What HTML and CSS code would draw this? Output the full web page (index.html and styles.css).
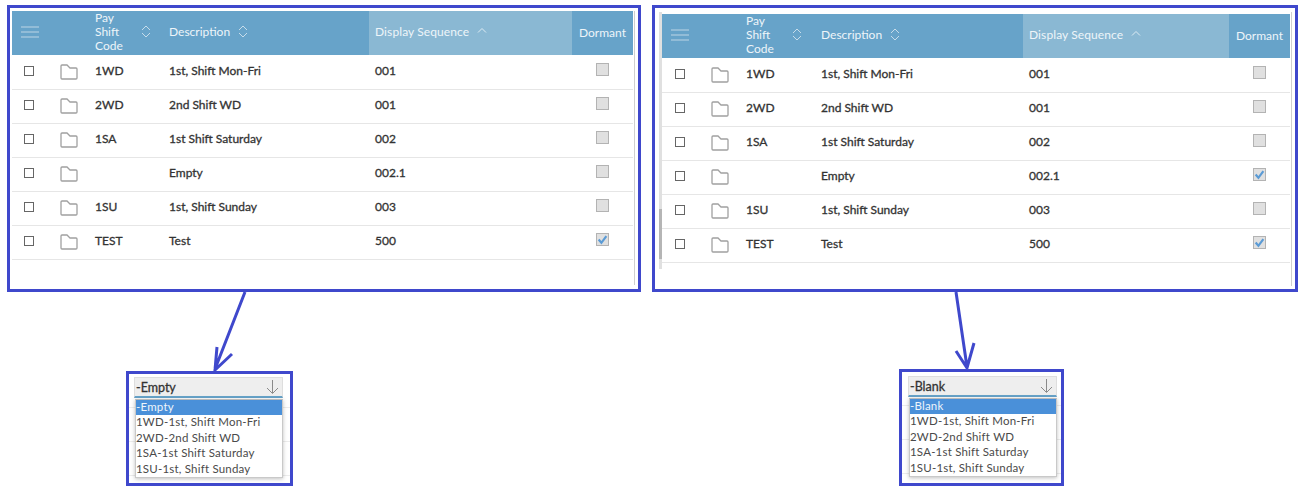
FILE: index.html
```html
<!DOCTYPE html>
<html lang="en">

<head>
    <meta charset="UTF-8">
    <title>Pay Shift Codes</title>
    <link rel="stylesheet" href="styles.css">
</head>

<body>

    <svg width="0" height="0" class="defs">
        <symbol id="folder" viewBox="0 0 18 16">
            <path d="M1 14V2q0-1 1-1h5l3 3h6q1 0 1 1v9q0 1-1 1H2q-1 0-1-1z" fill="#fff" stroke="#a0a0a0" stroke-width="1.300"/>
        </symbol>
        <symbol id="menu" viewBox="0 0 18 12">
            <path d="M0 1h18M0 6h18M0 11h18" stroke="#bdd6e6" stroke-width="1.200" fill="none"/>
        </symbol>
        <symbol id="sort" viewBox="0 0 10 13">
            <path d="M1 5l4-4 4 4M1 8l4 4 4-4" stroke="#c6dcea" fill="none"/>
        </symbol>
        <symbol id="sort-up" viewBox="0 0 10 5">
            <path d="M1 4.500l4-4 4 4" stroke="#dceaf2" fill="none"/>
        </symbol>
        <symbol id="tick" viewBox="0 0 10 10">
            <path d="M1.500 5l2.500 3 4.500-6" stroke="#5b9bd5" stroke-width="2" fill="none"/>
        </symbol>
        <symbol id="down" viewBox="0 0 13 14">
            <path d="M6.500 0v13M1 8l5.500 5.500L12 8" stroke="#8a8a8a" fill="none"/>
        </symbol>
    </svg>

    <section class="top">

        <div class="panel panel-a">
            <table class="grid">
                <colgroup>
                    <col class="c-sel"><col class="c-dir"><col class="c-code"><col class="c-desc"><col class="c-seq"><col class="c-dor">
                </colgroup>
                <thead>
                    <tr>
                        <th class="menu-cell"><svg class="menu-ico"><use href="#menu"/></svg></th>
                        <th></th>
                        <th><div class="code-head"><span>Pay<br>Shift<br>Code</span><svg class="sort-ico"><use href="#sort"/></svg></div></th>
                        <th><div class="desc-head"><span>Description</span><svg class="sort-ico"><use href="#sort"/></svg></div></th>
                        <th class="sorted"><div class="desc-head"><span>Display Sequence</span><svg class="up-ico"><use href="#sort-up"/></svg></div></th>
                        <th>Dormant</th>
                    </tr>
                </thead>
                <tbody>
                    <tr><td class="sel"><i class="box"></i></td><td><svg class="dir"><use href="#folder"/></svg></td><td>1WD</td><td>1st, Shift Mon-Fri</td><td>001</td><td class="dor"><i class="flag"></i></td></tr>
                    <tr><td class="sel"><i class="box"></i></td><td><svg class="dir"><use href="#folder"/></svg></td><td>2WD</td><td>2nd Shift WD</td><td>001</td><td class="dor"><i class="flag"></i></td></tr>
                    <tr><td class="sel"><i class="box"></i></td><td><svg class="dir"><use href="#folder"/></svg></td><td>1SA</td><td>1st Shift Saturday</td><td>002</td><td class="dor"><i class="flag"></i></td></tr>
                    <tr><td class="sel"><i class="box"></i></td><td><svg class="dir"><use href="#folder"/></svg></td><td></td><td>Empty</td><td>002.1</td><td class="dor"><i class="flag"></i></td></tr>
                    <tr><td class="sel"><i class="box"></i></td><td><svg class="dir"><use href="#folder"/></svg></td><td>1SU</td><td>1st, Shift Sunday</td><td>003</td><td class="dor"><i class="flag"></i></td></tr>
                    <tr><td class="sel"><i class="box"></i></td><td><svg class="dir"><use href="#folder"/></svg></td><td>TEST</td><td>Test</td><td>500</td><td class="dor"><i class="flag"><svg class="tick"><use href="#tick"/></svg></i></td></tr>
                </tbody>
            </table>
            <div class="hairline"></div>
        </div>

        <div class="panel panel-b">
            <div class="scroller"><div class="thumb"></div></div>
            <table class="grid">
                <colgroup>
                    <col class="c-sel"><col class="c-dir"><col class="c-code"><col class="c-desc"><col class="c-seq"><col class="c-dor">
                </colgroup>
                <thead>
                    <tr>
                        <th class="menu-cell"><svg class="menu-ico"><use href="#menu"/></svg></th>
                        <th></th>
                        <th><div class="code-head"><span>Pay<br>Shift<br>Code</span><svg class="sort-ico"><use href="#sort"/></svg></div></th>
                        <th><div class="desc-head"><span>Description</span><svg class="sort-ico"><use href="#sort"/></svg></div></th>
                        <th class="sorted"><div class="desc-head"><span>Display Sequence</span><svg class="up-ico"><use href="#sort-up"/></svg></div></th>
                        <th>Dormant</th>
                    </tr>
                </thead>
                <tbody>
                    <tr><td class="sel"><i class="box"></i></td><td><svg class="dir"><use href="#folder"/></svg></td><td>1WD</td><td>1st, Shift Mon-Fri</td><td>001</td><td class="dor"><i class="flag"></i></td></tr>
                    <tr><td class="sel"><i class="box"></i></td><td><svg class="dir"><use href="#folder"/></svg></td><td>2WD</td><td>2nd Shift WD</td><td>001</td><td class="dor"><i class="flag"></i></td></tr>
                    <tr><td class="sel"><i class="box"></i></td><td><svg class="dir"><use href="#folder"/></svg></td><td>1SA</td><td>1st Shift Saturday</td><td>002</td><td class="dor"><i class="flag"></i></td></tr>
                    <tr><td class="sel"><i class="box"></i></td><td><svg class="dir"><use href="#folder"/></svg></td><td></td><td>Empty</td><td>002.1</td><td class="dor"><i class="flag"><svg class="tick"><use href="#tick"/></svg></i></td></tr>
                    <tr><td class="sel"><i class="box"></i></td><td><svg class="dir"><use href="#folder"/></svg></td><td>1SU</td><td>1st, Shift Sunday</td><td>003</td><td class="dor"><i class="flag"></i></td></tr>
                    <tr><td class="sel"><i class="box"></i></td><td><svg class="dir"><use href="#folder"/></svg></td><td>TEST</td><td>Test</td><td>500</td><td class="dor"><i class="flag"><svg class="tick"><use href="#tick"/></svg></i></td></tr>
                </tbody>
            </table>
            <div class="hairline"></div>
        </div>

    </section>

    <section class="bottom">

        <div class="callout callout-a">
            <div class="picker">-Empty<svg class="down"><use href="#down"/></svg></div>
            <ul class="options">
                <li class="on">-Empty</li>
                <li>1WD-1st, Shift Mon-Fri</li>
                <li>2WD-2nd Shift WD</li>
                <li>1SA-1st Shift Saturday</li>
                <li>1SU-1st, Shift Sunday</li>
            </ul>
        </div>

        <div class="callout callout-b">
            <div class="picker">-Blank<svg class="down"><use href="#down"/></svg></div>
            <ul class="options">
                <li class="on">-Blank</li>
                <li>1WD-1st, Shift Mon-Fri</li>
                <li>2WD-2nd Shift WD</li>
                <li>1SA-1st Shift Saturday</li>
                <li>1SU-1st, Shift Sunday</li>
            </ul>
        </div>

    </section>

    <!-- arrows sit over everything -->
    <svg class="arrows" width="1305" height="497">
        <path d="M245 292L215 369M217 347L215 370L232 354"/>
        <path d="M956 292L967 367M956 351L967 368L974 343"/>
    </svg>

</body>

</html>
```

FILE: styles.css
```css
* {
    box-sizing: border-box;
}

body {
    margin: 0;
    width: 1305px;
    height: 497px;
    overflow: hidden;
    background: #fff;
    font-family: Lato, "Liberation Sans", sans-serif;
    font-size: 12px;
    color: #333;
    position: relative;
}

.defs {
    position: absolute;
}

.top {
    display: flex;
    gap: 11px;
    padding: 5px 0 0 7px;
}

.panel {
    display: flex;
    align-items: flex-start;
    height: 287px;
    border: 3px solid #3f48cc;
}

.panel-a {
    width: 634px;
    padding: 3px 0 0 2px;
}

.panel-b {
    width: 646px;
    padding: 4px 0 0 4px;
}

.panel-b .grid {
    margin-top: 2px;
}

.scroller {
    width: 3px;
    height: 257px;
    background: #e0e0e0;
}

.thumb {
    width: 3px;
    height: 50px;
    margin-top: 197px;
    background: #b5b5b5;
}

.hairline {
    width: 1px;
    height: 274px;
    margin-left: 1px;
    background: #cfcfcf;
}

.grid {
    border-collapse: separate;
    border-spacing: 0;
    table-layout: fixed;
}

.panel-a .grid {
    width: 621px;
}

.panel-b .grid {
    width: 628px;
}

.c-sel {
    width: 38px;
}

.c-dor {
    width: 61px;
}

.panel-a .c-dir {
    width: 39px;
}

.panel-a .c-code {
    width: 74px;
}

.panel-a .c-desc {
    width: 206px;
}

.panel-a .c-seq {
    width: 203px;
}

.panel-b .c-dir {
    width: 40px;
}

.panel-b .c-code {
    width: 75px;
}

.panel-b .c-desc {
    width: 208px;
}

.panel-b .c-seq {
    width: 206px;
}

.grid th {
    height: 45px;
    padding: 0 0 2px 6px;
    background: #67a3c9;
    border-bottom: 1px solid #fff;
    color: #eef5f9;
    font-weight: 400;
    font-size: 12px;
    line-height: 14px;
    text-align: left;
}

.grid th:last-child {
    padding: 0 0 0 7px;
}

.grid th.sorted {
    background: #8ab8d3;
    letter-spacing: 0.100px;
}

.grid th.menu-cell {
    padding-left: 9px;
}

.menu-ico {
    display: block;
    width: 18px;
    height: 12px;
}

.code-head {
    display: flex;
    align-items: center;
    gap: 18px;
}

.desc-head {
    display: flex;
    align-items: center;
    gap: 8px;
}

.sort-ico {
    width: 10px;
    height: 13px;
    margin-top: -2px;
}

.up-ico {
    width: 10px;
    height: 5px;
    margin-top: -3px;
}

.grid td {
    height: 34px;
    padding: 0 0 4px 6px;
    border-bottom: 1px solid #e6e6e6;
    font-weight: 400;
    font-size: 12px;
    color: #333;
    -webkit-text-stroke: 0.300px #333;
}

.grid td.sel {
    padding-left: 12px;
}

.panel-b .grid td.sel {
    padding-left: 13px;
}

.grid td.dor {
    padding-left: 24px;
}

.box {
    display: block;
    width: 10px;
    height: 10px;
    border: 1px solid #666;
    background: #fff;
}

.dir {
    display: block;
    width: 18px;
    height: 16px;
    margin-top: 3px;
    margin-left: 4px;
}

.panel-b .dir {
    margin-left: 5px;
}

.flag {
    display: block;
    width: 13px;
    height: 13px;
    margin-bottom: 2px;
    border: 1px solid #b3b3b3;
    background: #e0e0e0;
}

.tick {
    display: block;
    width: 11px;
    height: 11px;
}

.bottom {
    display: flex;
    align-items: flex-start;
}

.callout {
    border: 3px solid #3f48cc;
    height: 115px;
    padding: 3px 7px 0 5px;
    background: repeating-linear-gradient(#fff 0, #fff 33px, #ececec 33px, #ececec 34px);
}

.callout-a {
    width: 167px;
    margin: 79px 0 0 126px;
}

.callout-b {
    width: 165px;
    height: 117px;
    margin: 77px 0 0 606px;
    padding: 4px 4px 0 6px;
}

.picker {
    display: flex;
    align-items: center;
    justify-content: space-between;
    height: 21px;
    padding: 0 3px 0 1px;
    border: 1px solid #dedede;
    border-bottom: 2px solid #67a3c9;
    background: #eee;
    font-weight: 400;
    font-size: 12.500px;
    color: #333;
    -webkit-text-stroke: 0.300px #333;
}

.down {
    width: 13px;
    height: 14px;
}

.options {
    list-style: none;
    margin: 1px 0 0 1px;
    padding: 0;
    height: 79px;
    border: 1px solid #c9c9c9;
    border-top-color: #bbb;
    background: #fff;
    box-shadow: 0 1px 4px rgba(0, 0, 0, 0.25);
    font-size: 11.500px;
    letter-spacing: 0.200px;
    color: #4a4a4a;
}

.options li {
    height: 15.400px;
    line-height: 14px;
}

.options .on {
    background: #4a90d9;
    color: #eef5fb;
}

.arrows {
    position: absolute;
    left: 0;
    top: 0;
    fill: none;
    stroke: #3f48cc;
    stroke-width: 3;
}
```
